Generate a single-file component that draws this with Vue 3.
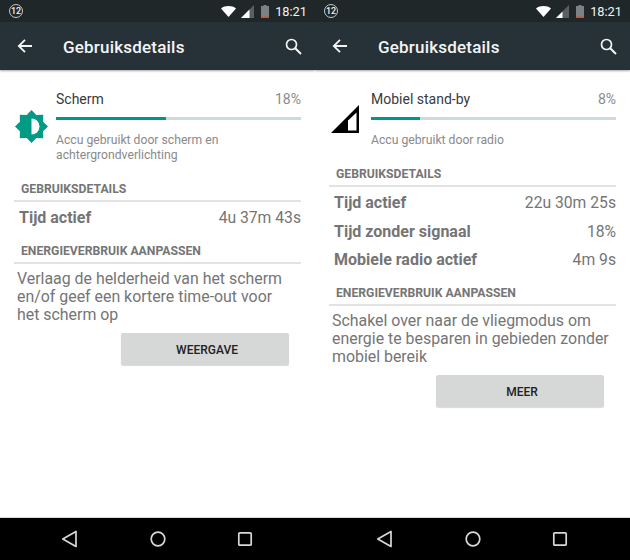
<script setup>
const screens = [
  {
    name: 'Scherm',
    percent: 18,
    barWidth: 45,
    icon: 'display',
    signalEdge: 8.5,
    summary: ['Accu gebruikt door scherm en', 'achtergrondverlichting'],
    stats: [{ label: 'Tijd actief', value: '4u 37m 43s' }],
    tip: ['Verlaag de helderheid van het scherm', 'en/of geef een kortere time-out voor', 'het scherm op'],
    action: 'WEERGAVE'
  },
  {
    name: 'Mobiel stand-by',
    percent: 8,
    barWidth: 20,
    icon: 'signal',
    signalEdge: 6.5,
    summary: ['Accu gebruikt door radio'],
    stats: [
      { label: 'Tijd actief', value: '22u 30m 25s' },
      { label: 'Tijd zonder signaal', value: '18%' },
      { label: 'Mobiele radio actief', value: '4m 9s' }
    ],
    tip: ['Schakel over naar de vliegmodus om', 'energie te besparen in gebieden zonder', 'mobiel bereik'],
    action: 'MEER'
  }
];
</script>

<template>
  <div class="phones">
    <section v-for="screen in screens" :key="screen.name" class="phone">
      <div class="status-bar">
        <span class="badge">12</span>
        <svg class="wifi" width="15" height="11" viewBox="0 0 15 11">
          <path d="M0 2.400C2.100.8 4.700 0 7.500 0s5.400.8 7.500 2.400L7.500 11z" fill="#fff" />
        </svg>
        <svg class="cell" width="13" height="13" viewBox="0 0 13 13">
          <path d="M13 0v13H0z" fill="#59605f" />
          <path :d="`M${screen.signalEdge} ${13 - screen.signalEdge}V13H0z`" fill="#fff" />
        </svg>
        <svg class="battery" width="8" height="13" viewBox="0 0 8 13">
          <path d="M2.500 0h3v1H8v12H0V1h2.500z" fill="#7c8283" />
          <rect y="11.500" width="8" height="1.500" fill="#e8491d" />
        </svg>
        <span class="clock">18:21</span>
      </div>

      <header class="app-bar">
        <svg class="back" width="16" height="16" viewBox="0 0 16 16">
          <path d="M15 8H2M8 1.800 1.800 8 8 14.200" fill="none" stroke="#f3f5f5" stroke-width="1.800" />
        </svg>
        <h1>Gebruiksdetails</h1>
        <svg class="search" width="17" height="17" viewBox="0 0 17 17">
          <circle cx="6.500" cy="6.500" r="5" fill="none" stroke="#f3f5f5" stroke-width="1.700" />
          <path d="M10.200 10.200 16 16" stroke="#f3f5f5" stroke-width="2" />
        </svg>
      </header>

      <main class="content">
        <div class="summary">
          <div class="summary-icon">
            <svg v-if="screen.icon === 'display'" width="33" height="33" viewBox="0 0 33 33">
              <path d="M16.500 0l4.800 4.900 6.900-.1-.1 6.900 4.900 4.800-4.900 4.800.1 6.900-6.900-.1-4.800 4.900-4.800-4.900-6.900.1.100-6.900L0 16.500l4.900-4.800-.1-6.900 6.900.1z" fill="#009b84" />
              <path d="M16.500 8.500a8 8 0 0 1 0 16z" fill="#fff" />
            </svg>
            <svg v-else width="30" height="30" viewBox="0 0 30 30">
              <path d="M29 1v28H1z" fill="#000" />
              <path d="M26.500 8.500v18H18V16.500z" fill="#fff" />
            </svg>
          </div>
          <div class="summary-body">
            <div class="summary-title">
              <span>{{ screen.name }}</span>
              <span class="percent">{{ screen.percent }}%</span>
            </div>
            <div class="track">
              <div class="fill" :style="{ width: screen.barWidth + '%' }"></div>
            </div>
            <p class="summary-text">
              <span v-for="line in screen.summary" :key="line">{{ line }}</span>
            </p>
          </div>
        </div>

        <h2 class="section-title">GEBRUIKSDETAILS</h2>
        <div class="stats">
          <div v-for="stat in screen.stats" :key="stat.label" class="stat">
            <strong>{{ stat.label }}</strong>
            <span>{{ stat.value }}</span>
          </div>
        </div>

        <h2 class="section-title">ENERGIEVERBRUIK AANPASSEN</h2>
        <p class="tip">
          <span v-for="line in screen.tip" :key="line">{{ line }}</span>
        </p>
        <button class="action" type="button">{{ screen.action }}</button>
      </main>

      <nav class="nav-bar">
        <svg width="18" height="18" viewBox="0 0 18 18">
          <path d="M15 1.500v15L1.800 9z" fill="none" stroke="#d8d8d8" stroke-width="1.700" stroke-linejoin="round" />
        </svg>
        <svg width="18" height="18" viewBox="0 0 18 18">
          <circle cx="9" cy="9" r="6.800" fill="none" stroke="#d8d8d8" stroke-width="1.700" />
        </svg>
        <svg width="18" height="18" viewBox="0 0 18 18">
          <rect x="2.800" y="2.800" width="12.400" height="12.400" rx="1" fill="none" stroke="#d8d8d8" stroke-width="1.700" />
        </svg>
      </nav>
    </section>
  </div>
</template>

<style scoped>
.phones {
  display: grid;
  grid-template-columns: 315px 315px;
  width: 630px;
  height: 560px;
  font-family: Roboto, "Liberation Sans", sans-serif;
  background: #fff;
}

.phone {
  display: flex;
  flex-direction: column;
  height: 560px;
  min-width: 0;
  overflow: hidden;
}

.status-bar {
  display: flex;
  align-items: center;
  height: 22px;
  padding: 0 8px 0 9px;
  background: #202729;
  color: #f0f2f2;
}

.badge {
  display: flex;
  align-items: center;
  justify-content: center;
  box-sizing: border-box;
  width: 14px;
  height: 14px;
  border: 1px solid #c4c8c8;
  border-radius: 50%;
  font-size: 9px;
  font-weight: 500;
}

.wifi {
  margin-left: auto;
}

.cell {
  margin-left: 5px;
}

.battery {
  margin-left: 7px;
}

.clock {
  margin-left: 6px;
  font-size: 12.800px;
}

.app-bar {
  position: relative;
  z-index: 1;
  display: flex;
  align-items: center;
  flex: none;
  height: 48px;
  padding: 0 13px 0 17px;
  background: #263238;
  box-shadow: 0 1px 2px rgba(0, 0, 0, 0.35);
}

.app-bar h1 {
  margin: 1px 0 0 30px;
  color: #f3f5f5;
  font-size: 17px;
  font-weight: 500;
  letter-spacing: 0.2px;
}

.search {
  margin-left: auto;
}

.content {
  display: flex;
  flex: 1;
  flex-direction: column;
  min-height: 0;
  padding: 20px 14px 0;
  border-bottom: 1px solid #d8d8d8;
}

.summary {
  display: flex;
  align-items: center;
  margin-bottom: 18px;
}

.summary-icon {
  display: flex;
  flex: none;
  align-items: center;
  box-sizing: border-box;
  width: 42px;
  padding-left: 1px;
}

.summary-body {
  flex: 1;
  min-width: 0;
}

.summary-title {
  display: flex;
  justify-content: space-between;
  color: #3a3a3a;
  font-size: 14px;
  line-height: 18px;
}

.percent {
  color: #8a8a8a;
}

.track {
  height: 3px;
  margin-top: 9px;
  background: #cfd8dc;
}

.fill {
  height: 100%;
  background: #009688;
}

.summary-text {
  display: flex;
  flex-direction: column;
  margin: 13px 0 0;
  color: #8a8a8a;
  font-size: 12.200px;
  line-height: 15px;
}

.section-title {
  margin: 0;
  padding: 1px 0 4px 7px;
  border-bottom: 2px solid #e3e3e3;
  color: #757575;
  font-size: 12.200px;
  font-weight: 700;
  line-height: 14px;
}

.stats {
  display: flex;
  flex-direction: column;
  gap: 8px;
  padding: 6px 0 11px 5px;
  margin-bottom: 3px;
}

.stat {
  display: flex;
  justify-content: space-between;
  color: #757575;
  font-size: 15.700px;
  line-height: 20.500px;
}

.stat strong {
  font-size: 16px;
  font-weight: 700;
}

.tip {
  display: flex;
  flex-direction: column;
  margin: 6px 0 0 3px;
  color: #757575;
  font-size: 15.900px;
  line-height: 18px;
}

.action {
  align-self: flex-end;
  width: 168px;
  height: 32px;
  margin: 9px 12px 0 0;
  padding: 2px 0 0 4px;
  border: 0;
  border-radius: 2px;
  background: #d6d7d7;
  box-shadow: 0 1px 1px rgba(0, 0, 0, 0.15);
  color: #222;
  font-family: inherit;
  font-size: 12px;
  font-weight: 500;
}

.nav-bar {
  display: flex;
  flex: none;
  align-items: center;
  justify-content: space-between;
  height: 42px;
  padding: 0 61px;
  background: #000;
}
</style>

<style>
html,
body {
  margin: 0;
  background: #fff;
}
</style>
